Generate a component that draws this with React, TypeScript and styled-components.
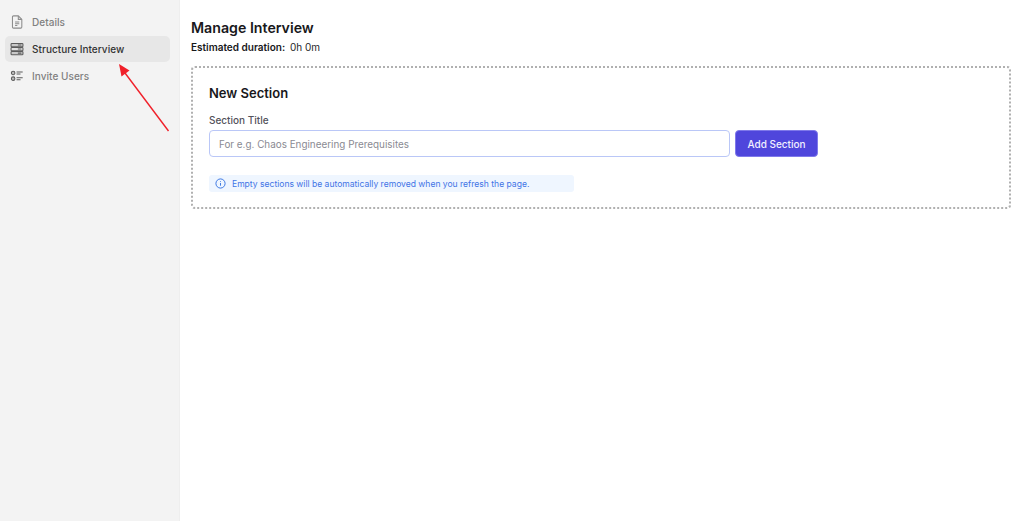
import React from 'react';
import styled, { createGlobalStyle } from 'styled-components';

const GlobalStyle = createGlobalStyle`
  html, body {
    margin: 0;
    height: 100%;
    background: #fff;
    font-family: 'Inter', 'Liberation Sans', sans-serif;
  }
  #root {
    height: 100%;
  }
`;

const App: React.FC = () => {
  return (
    <>
      <GlobalStyle />
      <Page>
        <Sidebar>
          <NavItem>
            <NavIcon viewBox="0 0 16 16">
              <path d="M4 1h5.5L13.5 5v8.8a1.2 1.2 0 0 1-1.2 1.2H4a1.2 1.2 0 0 1-1.2-1.2V2.2A1.2 1.2 0 0 1 4 1z" />
              <path d="M9.5 1v4h4" />
              <path d="M5.8 8h4.8M5.8 10h4.8M5.8 12h2.6" />
            </NavIcon>
            Details
          </NavItem>
          <NavItem $active>
            <NavIcon viewBox="0 0 16 16" $dark>
              <rect x="1.2" y="1.6" width="13.6" height="3.8" rx="0.9" fill="#c9c9c9" />
              <rect x="1.2" y="6.2" width="13.6" height="3.8" rx="0.9" fill="#e2e2e2" />
              <rect x="1.2" y="10.8" width="13.6" height="3.8" rx="0.9" fill="#c9c9c9" />
              <path d="M9 3.5h4M9 8.1h4M9 12.7h4" />
            </NavIcon>
            Structure Interview
          </NavItem>
          <NavItem>
            <NavIcon viewBox="0 0 16 16" $dark>
              <circle cx="3.6" cy="4.5" r="2" fill="#bbb" />
              <circle cx="3.6" cy="11" r="2" fill="#bbb" />
              <path d="M7.5 3.4h7M7.5 5.8h4.5M7.5 9.9h7M7.5 12.3h4.5" />
            </NavIcon>
            Invite Users
          </NavItem>
        </Sidebar>
        <Main>
          <Title>Manage Interview</Title>
          <Duration>
            <strong>Estimated duration:</strong> 0h 0m
          </Duration>
          <Card>
            <CardTitle>New Section</CardTitle>
            <FieldLabel>Section Title</FieldLabel>
            <FieldRow>
              <TitleInput placeholder="For e.g. Chaos Engineering Prerequisites" />
              <AddButton>Add Section</AddButton>
            </FieldRow>
            <Notice>
              <svg width="11" height="11" viewBox="0 0 12 12" fill="none" stroke="#2f6fe0" strokeWidth="1">
                <circle cx="6" cy="6" r="5" />
                <path d="M6 5.4v3M6 3.4v.8" />
              </svg>
              Empty sections will be automatically removed when you refresh the page.
            </Notice>
          </Card>
        </Main>
        <Arrow width="60" height="75" viewBox="0 0 60 75">
          <path d="M49.5 70 L6 12" stroke="#f0202a" strokeWidth="1.4" fill="none" />
          <path d="M0 3 L10.5 9.5 L2.5 15.5 Z" fill="#f0202a" />
        </Arrow>
      </Page>
    </>
  );
};

export default App;

const Page = styled.div`
  position: relative;
  display: flex;
  height: 521px;
  overflow: hidden;
`;

const Sidebar = styled.nav`
  box-sizing: border-box;
  width: 180px;
  flex: none;
  padding: 9px 9px 0 5px;
  background: #f3f3f3;
  border-right: 1px solid #eeeeee;
`;

const NavItem = styled.div<{ $active?: boolean }>`
  display: flex;
  align-items: center;
  gap: 8px;
  height: 26px;
  margin-bottom: 1px;
  padding-left: 5px;
  border-radius: 5px;
  font-size: 10px;
  font-weight: 500;
  letter-spacing: 0.05px;
  color: ${(p) => (p.$active ? '#333' : '#808080')};
  background: ${(p) => (p.$active ? '#e7e7e7' : 'transparent')};
`;

const NavIcon = styled.svg<{ $dark?: boolean }>`
  width: 14px;
  height: 14px;
  flex: none;
  fill: none;
  stroke: ${(p) => (p.$dark ? '#5c5c5c' : '#8c8c8c')};
  stroke-width: 1.2;
`;

const Main = styled.main`
  flex: 1;
  padding: 19px 13px 0 11px;
`;

const Title = styled.h1`
  margin: 0;
  font-size: 14.2px;
  line-height: 18px;
  font-weight: 600;
  color: #18181b;
`;

const Duration = styled.div`
  margin-top: 3px;
  font-size: 10px;
  line-height: 14px;
  color: #27272a;

  strong {
    font-weight: 600;
    margin-right: 2px;
    color: #18181b;
  }
`;

const Card = styled.section`
  box-sizing: border-box;
  height: 143px;
  margin-top: 12px;
  padding: 17px 16px 0;
  border: 2px dotted #b0b0b0;
  border-radius: 4px;
`;

const CardTitle = styled.h2`
  margin: 0;
  font-size: 13px;
  line-height: 17px;
  font-weight: 600;
  color: #18181b;
`;

const FieldLabel = styled.label`
  display: block;
  margin-top: 11px;
  font-size: 10px;
  line-height: 14px;
  font-weight: 500;
  color: #52525b;
`;

const FieldRow = styled.div`
  display: flex;
  gap: 5px;
  margin-top: 3px;
`;

const TitleInput = styled.input`
  box-sizing: border-box;
  width: 521px;
  height: 27px;
  padding: 0 9px;
  border: 1px solid #bac7f7;
  border-radius: 4px;
  outline: none;
  font-family: inherit;
  font-size: 9.9px;

  &::placeholder {
    color: #8a8a92;
    opacity: 1;
  }
`;

const AddButton = styled.button`
  box-sizing: border-box;
  width: 83px;
  height: 27px;
  padding: 0;
  border: 1px solid #7f79ea;
  border-radius: 4px;
  background: #4f46dc;
  color: #f1f0ff;
  font-family: inherit;
  font-size: 10px;
  font-weight: 500;
`;

const Notice = styled.div`
  display: flex;
  align-items: center;
  gap: 6px;
  box-sizing: border-box;
  width: 365px;
  height: 17px;
  margin-top: 18px;
  padding-left: 6px;
  border-radius: 3px;
  background: #eff6ff;
  color: #3f74e6;
  font-size: 8.55px;
`;

const Arrow = styled.svg`
  position: absolute;
  left: 119px;
  top: 61px;
`;
